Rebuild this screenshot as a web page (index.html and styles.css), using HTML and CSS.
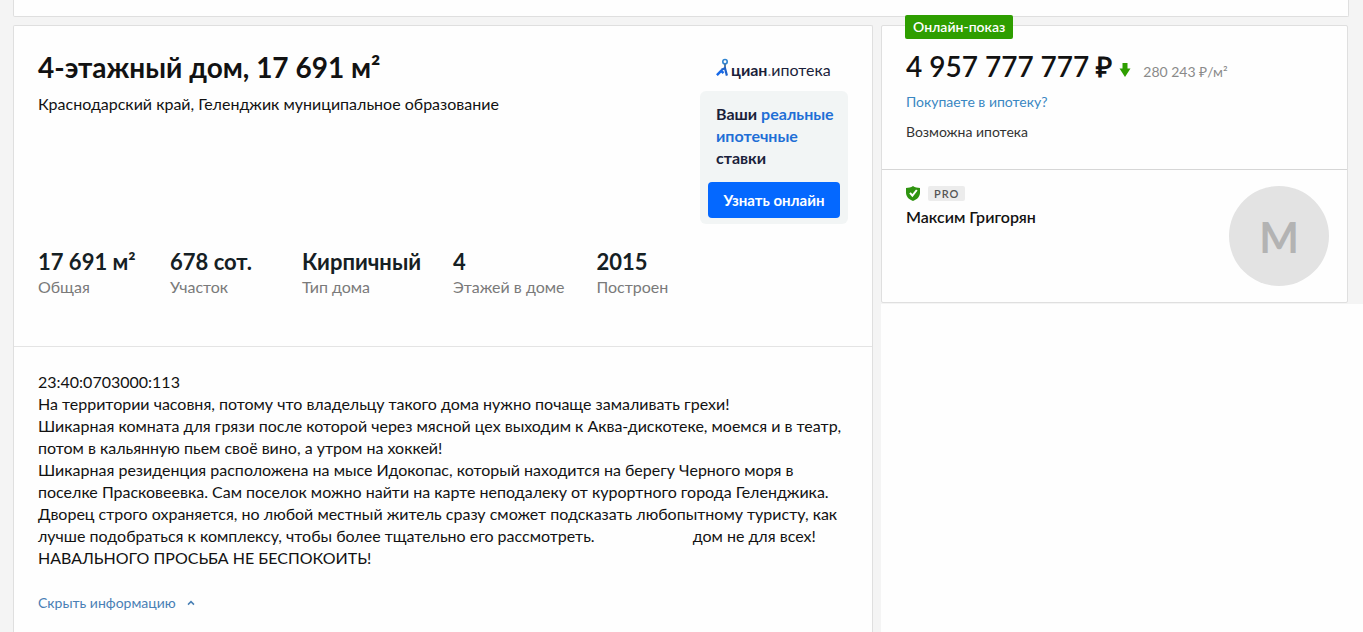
FILE: index.html
```html
<!DOCTYPE html>
<html lang="ru">
<head>
<meta charset="utf-8">
<meta name="viewport" content="width=device-width, initial-scale=1">
<title>4-этажный дом, 17 691 м²</title>
<link rel="stylesheet" href="styles.css">
</head>
<body>
<div class="page">
  <div class="top-strip"></div>
  <div class="columns">
    <main class="card listing">
      <section class="summary">
        <header class="intro">
          <div class="heading">
            <h1 class="title">4-этажный дом, 17 691 м²</h1>
            <p class="address">Краснодарский край, Геленджик муниципальное образование</p>
          </div>
          <aside class="mortgage">
            <div class="brand">
              <svg class="brand-mark" viewBox="0 0 12 18" width="12" height="18" aria-hidden="true">
                <circle cx="9" cy="3.700" r="2.200" fill="none" stroke="#2f83d0" stroke-width="1.600"/>
                <path d="M9 6.200v4" stroke="#1c4f86" stroke-width="1.500"/>
                <path d="M.9 17.200 5.200 12.800l2.300 2.400" fill="none" stroke="#1769e8" stroke-width="2.400"/>
                <path d="M5.400 11.800 9 10.300l1.900 7.300" fill="none" stroke="#1f62c9" stroke-width="2.200"/>
              </svg>
              <span class="brand-text"><b>циан</b><span class="brand-dot">.</span>ипотека</span>
            </div>
            <div class="offer">
              <p class="offer-text">Ваши <span class="accent">реальные</span> <span class="accent">ипотечные</span> ставки</p>
              <button class="offer-button" type="button">Узнать онлайн</button>
            </div>
          </aside>
        </header>
        <dl class="facts">
          <div class="fact"><dt>Общая</dt><dd>17 691 м²</dd></div>
          <div class="fact"><dt>Участок</dt><dd>678 сот.</dd></div>
          <div class="fact"><dt>Тип дома</dt><dd>Кирпичный</dd></div>
          <div class="fact"><dt>Этажей в доме</dt><dd>4</dd></div>
          <div class="fact"><dt>Построен</dt><dd>2015</dd></div>
        </dl>
      </section>
      <section class="description">
        <p>23:40:0703000:113</p>
        <p>На территории часовня, потому что владельцу такого дома нужно почаще замаливать грехи!</p>
        <p>Шикарная комната для грязи после которой через мясной цех выходим к Аква-дискотеке, моемся и в театр, потом в кальянную пьем своё вино, а утром на хоккей!</p>
        <p>Шикарная резиденция расположена на мысе Идокопас, который находится на берегу Черного моря в поселке Прасковеевка. Сам поселок можно найти на карте неподалеку от курортного города Геленджика. Дворец строго охраняется, но любой местный житель сразу сможет подсказать любопытному туристу, как <span>лучше подобраться к комплексу, чтобы более тщательно его рассмотреть.</span> <span class="after-gap">дом не для всех!</span></p>
        <p>НАВАЛЬНОГО ПРОСЬБА НЕ БЕСПОКОИТЬ!</p>
        <button class="toggle" type="button">Скрыть информацию
          <svg viewBox="0 0 8 6" width="8" height="6" aria-hidden="true"><path d="M1 4.600 4 1.600l3 3" fill="none" stroke="currentColor" stroke-width="1.500"/></svg>
        </button>
      </section>
    </main>
    <div class="side">
      <aside class="card offer-card">
        <span class="badge">Онлайн-показ</span>
        <section class="price-block">
          <div class="price-row">
            <span class="price">4 957 777 777 ₽</span>
            <svg class="price-arrow" viewBox="0 0 12 14" width="12" height="14" aria-label="Цена снижена" role="img"><path d="M3.500 0h5v5.500H11.500L6 14 .5 5.500h3z" fill="#2e9e00"/></svg>
            <span class="price-per">280 243 ₽/м²</span>
          </div>
          <a class="mortgage-link" href="#">Покупаете в ипотеку?</a>
          <p class="terms">Возможна ипотека</p>
        </section>
        <section class="seller">
          <div class="seller-info">
            <div class="seller-tags">
              <svg viewBox="0 0 14 15" width="14" height="15" aria-hidden="true">
                <path d="M7 0c2 1.400 4.500 1.900 7 2v4.500c0 4-2.800 7-7 8.500-4.200-1.500-7-4.500-7-8.500V2c2.500-.1 5-.6 7-2z" fill="#2f9410"/>
                <path d="M4 6.800 6.400 9.600 10.800 4" fill="none" stroke="#fff" stroke-width="2"/>
              </svg>
              <span class="pro">PRO</span>
            </div>
            <p class="seller-name">Максим Григорян</p>
          </div>
          <div class="avatar">М</div>
        </section>
      </aside>
      <div class="side-fill"></div>
    </div>
  </div>
</div>
</body>
</html>
```
FILE: styles.css
```css
* {
  box-sizing: border-box;
}

body {
  margin: 0;
  background: #f4f4f4;
  color: #121212;
  font: 16px/22px Lato, "Open Sans", sans-serif;
}

h1, p, dl, dd {
  margin: 0;
}

button {
  border: 0;
  font: inherit;
  cursor: pointer;
}

svg {
  flex: none;
}

.page {
  display: flex;
  flex-direction: column;
  gap: 8px;
  min-height: 100vh;
}

.top-strip {
  height: 17px;
  margin: 0 14px 0 13px;
  background: #fefefe;
  border: 1px solid #dfdfdf;
  border-top: 0;
  border-radius: 0 0 2px 2px;
}

.columns {
  flex: 1;
  display: grid;
  grid-template-columns: minmax(0, 860fr) minmax(0, 482fr);
  gap: 8px;
  padding-left: 13px;
}

.card {
  background: #fefefe;
  border: 1px solid #dfdfdf;
  border-radius: 2px;
}

.listing {
  border-bottom: 0;
  border-radius: 2px 2px 0 0;
}

.summary {
  padding: 23px 24px 48px;
  border-bottom: 1px solid #e4e4e4;
}

.intro {
  display: flex;
  justify-content: space-between;
  gap: 24px;
}

.title {
  font-size: 28px;
  line-height: 36px;
  font-weight: 700;
}

.address {
  margin-top: 8px;
}

.mortgage {
  flex: none;
  width: 148px;
  padding-top: 6px;
  color: #1b1f3b;
}

.brand {
  display: flex;
  align-items: center;
  gap: 3px;
  height: 24px;
  padding-left: 16px;
  margin-bottom: 12px;
  line-height: 24px;
}

.brand-text {
  padding-top: 6px;
  white-space: nowrap;
}

.brand-dot {
  color: #8a8a9a;
}

.offer {
  padding: 12px 8px 6px;
  border-radius: 6px;
  background: #f2f5f5;
}

.offer-text {
  padding: 0 0 13px 8px;
  font-weight: 700;
}

.accent {
  color: #1f6fd6;
}

.offer-button {
  width: 100%;
  height: 36px;
  padding: 0;
  border-radius: 4px;
  background: #0468ff;
  color: #fff;
  font-size: 15px;
  font-weight: 700;
}

.facts {
  display: flex;
  gap: 32px;
  margin-top: 24px;
}

.fact {
  display: flex;
  flex-direction: column-reverse;
  justify-content: flex-end;
  min-width: 100px;
}

.fact dt {
  color: #7a7a7a;
}

.fact dd {
  font-size: 22px;
  line-height: 28px;
  font-weight: 700;
  color: #152024;
}

.description {
  padding: 24px 24px 18px;
}

.after-gap {
  margin-left: 94px;
}

.toggle {
  display: flex;
  align-items: center;
  gap: 11px;
  margin-top: 24px;
  padding: 0;
  background: none;
  color: #4a80b5;
  font-size: 14px;
  line-height: 20px;
}

.side {
  display: flex;
  flex-direction: column;
  gap: 1px;
}

.offer-card {
  position: relative;
  margin-right: 15px;
}

.badge {
  position: absolute;
  top: -11px;
  left: 23px;
  padding: 2px 8px;
  border-radius: 2px;
  background: #2e9e00;
  color: #fff;
  font-size: 14px;
  line-height: 20px;
  font-weight: 600;
}

.price-block {
  padding: 21px 24px 27px;
  border-bottom: 1px solid #d6d6d6;
  font-size: 14px;
  line-height: 20px;
}

.price-row {
  display: flex;
  align-items: center;
}

.price {
  font-size: 28px;
  line-height: 38px;
  font-weight: 600;
}

.price-arrow {
  margin: 8px 12px 0 7px;
}

.price-per {
  padding-top: 12px;
  color: #8a8a8a;
}

.mortgage-link {
  display: inline-block;
  margin: 7px 0 10px;
  color: #3a87c2;
  text-decoration: none;
}

.terms {
  color: #333;
}

.seller {
  display: flex;
  justify-content: space-between;
  padding: 16px 18px 16px 24px;
}

.seller-tags {
  display: flex;
  align-items: center;
  gap: 8px;
  margin-bottom: 5px;
}

.pro {
  padding: 0 6px;
  border-radius: 2px;
  background: #ececec;
  color: #555;
  font-size: 11px;
  line-height: 15px;
  font-weight: 600;
  letter-spacing: 1px;
}

.seller-name {
  font-weight: 600;
}

.avatar {
  width: 100px;
  height: 100px;
  border-radius: 50%;
  background: #e3e3e3;
  color: #b3b3b3;
  font-size: 42px;
  line-height: 102px;
  font-weight: 700;
  text-align: center;
}

.side-fill {
  flex: 1;
  background: #fefefe;
}
```
